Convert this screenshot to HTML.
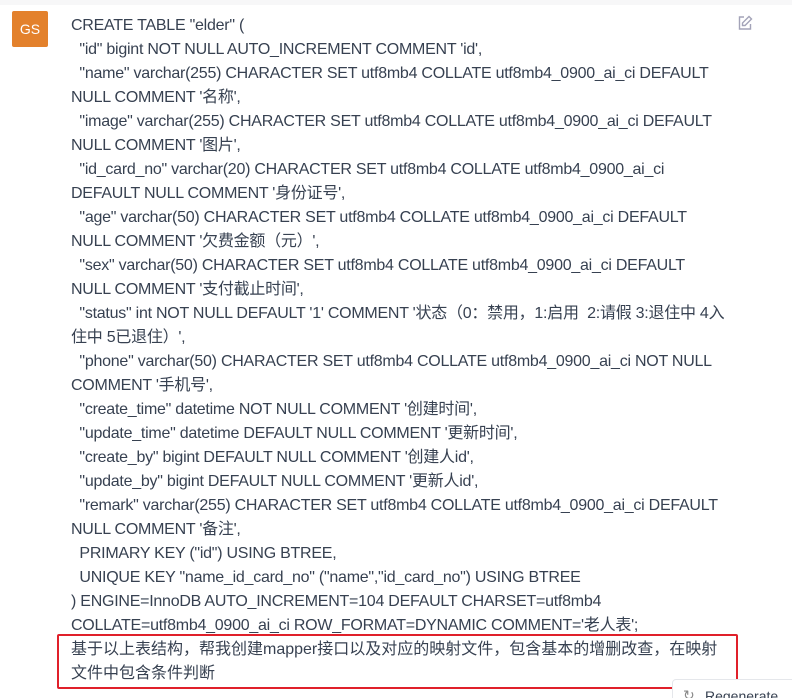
<!DOCTYPE html>
<html><head><meta charset="utf-8"><style>
html,body{margin:0;width:792px;height:698px;overflow:hidden}
body{background:#fff;font-family:"Liberation Sans","Noto Sans CJK SC",sans-serif;color:#374151;position:relative}
.top{position:absolute;left:0;top:0;width:792px;height:5px;background:#f7f7f8}
.av{position:absolute;left:12px;top:11px;width:36px;height:36px;background:#e3812c;border-radius:2px;color:#fff;font-size:14px;line-height:36px;text-align:center}
.l{position:absolute;left:71px;font-size:16px;line-height:24px;white-space:pre;letter-spacing:-0.25px}
.c{letter-spacing:0}
.box{position:absolute;left:57px;top:634px;width:677px;height:51px;border:2px solid #e0202a;border-radius:2px}
.btn{position:absolute;left:672px;top:679px;width:140px;height:40px;border:1px solid #e5e7eb;border-radius:4px;background:#fff;font-size:14px;color:#374151}
</style></head><body>
<div class="top"></div>
<div class="av">GS</div>
<svg style="position:absolute;left:737px;top:15px" width="16" height="16" viewBox="0 0 16 16" fill="none" stroke="#a3a3b8" stroke-width="1.4"><path d="M7 2H2.5v12h11V9"/><path d="M12 1.5l2.5 2.5L8 10.5H5.5V8z"/></svg>
<div class="l" style="top:14px">CREATE TABLE "elder" (</div>
<div class="l" style="top:38px">  "id" bigint NOT NULL AUTO_INCREMENT COMMENT 'id',</div>
<div class="l" style="top:62px">  "name" varchar(255) CHARACTER SET utf8mb4 COLLATE utf8mb4_0900_ai_ci DEFAULT</div>
<div class="l" style="top:86px">NULL COMMENT '名称',</div>
<div class="l" style="top:110px">  "image" varchar(255) CHARACTER SET utf8mb4 COLLATE utf8mb4_0900_ai_ci DEFAULT</div>
<div class="l" style="top:134px">NULL COMMENT '图片',</div>
<div class="l" style="top:158px">  "id_card_no" varchar(20) CHARACTER SET utf8mb4 COLLATE utf8mb4_0900_ai_ci</div>
<div class="l" style="top:182px">DEFAULT NULL COMMENT '身份证号',</div>
<div class="l" style="top:206px">  "age" varchar(50) CHARACTER SET utf8mb4 COLLATE utf8mb4_0900_ai_ci DEFAULT</div>
<div class="l" style="top:230px">NULL COMMENT '欠费金额（元）',</div>
<div class="l" style="top:254px">  "sex" varchar(50) CHARACTER SET utf8mb4 COLLATE utf8mb4_0900_ai_ci DEFAULT</div>
<div class="l" style="top:278px">NULL COMMENT '支付截止时间',</div>
<div class="l" style="top:302px">  "status" int NOT NULL DEFAULT '1' COMMENT '状态（0：禁用，1:启用  2:请假 3:退住中 4入</div>
<div class="l" style="top:326px">住中 5已退住）',</div>
<div class="l" style="top:350px">  "phone" varchar(50) CHARACTER SET utf8mb4 COLLATE utf8mb4_0900_ai_ci NOT NULL</div>
<div class="l" style="top:374px">COMMENT '手机号',</div>
<div class="l" style="top:398px">  "create_time" datetime NOT NULL COMMENT '创建时间',</div>
<div class="l" style="top:422px">  "update_time" datetime DEFAULT NULL COMMENT '更新时间',</div>
<div class="l" style="top:446px">  "create_by" bigint DEFAULT NULL COMMENT '创建人id',</div>
<div class="l" style="top:470px">  "update_by" bigint DEFAULT NULL COMMENT '更新人id',</div>
<div class="l" style="top:494px">  "remark" varchar(255) CHARACTER SET utf8mb4 COLLATE utf8mb4_0900_ai_ci DEFAULT</div>
<div class="l" style="top:518px">NULL COMMENT '备注',</div>
<div class="l" style="top:542px">  PRIMARY KEY ("id") USING BTREE,</div>
<div class="l" style="top:566px">  UNIQUE KEY "name_id_card_no" ("name","id_card_no") USING BTREE</div>
<div class="l" style="top:590px">) ENGINE=InnoDB AUTO_INCREMENT=104 DEFAULT CHARSET=utf8mb4</div>
<div class="l" style="top:614px">COLLATE=utf8mb4_0900_ai_ci ROW_FORMAT=DYNAMIC COMMENT='老人表';</div>
<div class="l c" style="top:638px">基于以上表结构，帮我创建mapper接口以及对应的映射文件，包含基本的增删改查，在映射</div>
<div class="l c" style="top:662px">文件中包含条件判断</div>
<div class="box"></div>
<div class="btn"><span style="position:absolute;left:10px;top:7px;color:#888">↻</span><span style="position:absolute;left:32px;top:8px">Regenerate</span></div>
</body></html>
